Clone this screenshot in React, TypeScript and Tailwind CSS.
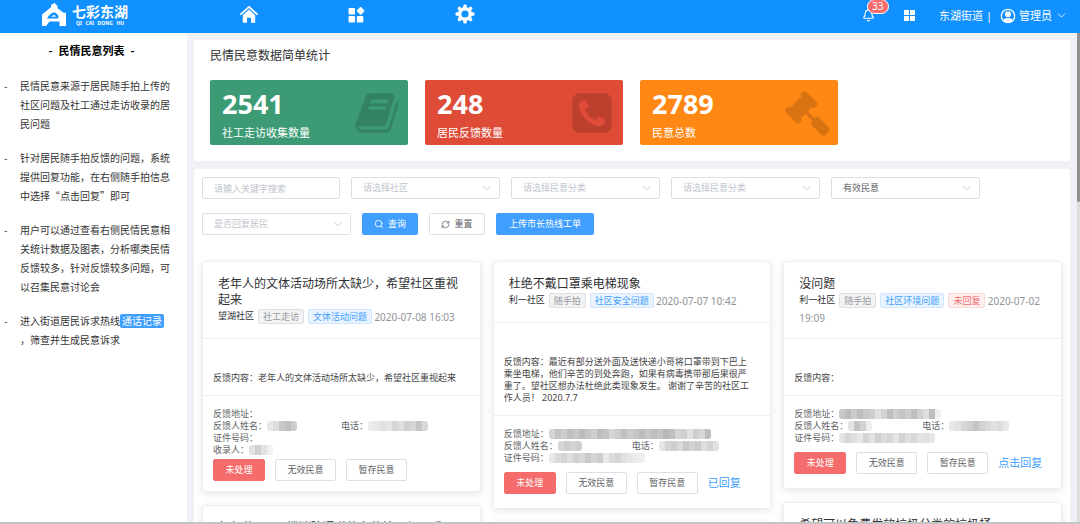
import type { ReactNode } from "react";
import { ChevronDown, RefreshCw, Search, Bell } from "lucide-react";

type Tone = "gray" | "blue" | "red";

type Opinion = {
  title: string;
  community?: string;
  tags?: { text: string; tone: Tone }[];
  time?: string;
  content?: string;
  address?: number[];
  name?: number[];
  phone?: number[];
  idNumber?: number[];
  recorder?: number[];
  reply?: string;
};

const columns: Opinion[][] = [
  [
    {
      title: "老年人的文体活动场所太缺少，希望社区重视起来",
      community: "望湖社区",
      tags: [
        { text: "社工走访", tone: "gray" },
        { text: "文体活动问题", tone: "blue" },
      ],
      time: "2020-07-08 16:03",
      content: "老年人的文体活动场所太缺少，希望社区重视起来",
      name: [232, 222, 200, 190, 206],
      phone: [236, 232, 226, 230, 214, 222, 208, 214, 196, 216],
      recorder: [226, 208, 226, 240],
    },
    { title: "胡郭花园201楼消防通道停车的情况很严重" },
  ],
  [
    {
      title: "杜绝不戴口罩乘电梯现象",
      community: "利一社区",
      tags: [
        { text: "随手拍", tone: "gray" },
        { text: "社区安全问题", tone: "blue" },
      ],
      time: "2020-07-07 10:42",
      content:
        "最近有部分送外面及送快递小哥将口罩带到下巴上乘坐电梯，他们辛苦的到处奔跑，如果有病毒携带那后果很严重了。望社区想办法杜绝此类现象发生。 谢谢了辛苦的社区工作人员！ 2020.7.7",
      address: [
        212, 196, 204, 190, 200, 186, 198, 206, 190, 196, 214, 206, 192, 204,
        198, 188, 200, 190, 196, 184, 192, 214, 208, 226, 206, 216, 190,
      ],
      name: [214, 204, 212, 206],
      phone: [230, 212, 206, 218, 200, 210, 204, 222, 210, 226],
      idNumber: [
        232, 218, 212, 222, 208, 216, 200, 214, 206, 234, 218, 212, 224, 230,
        236, 238,
      ],
      reply: "已回复",
    },
    { title: "" },
  ],
  [
    {
      title: "没问题",
      community: "利一社区",
      tags: [
        { text: "随手拍", tone: "gray" },
        { text: "社区环境问题", tone: "blue" },
        { text: "未回复", tone: "red" },
      ],
      time: "2020-07-02 19:09",
      content: "",
      address: [
        200, 188, 204, 190, 200, 206, 224, 212, 190, 206, 196, 204, 192, 208,
        222, 190, 238,
      ],
      name: [226, 196, 210, 238],
      phone: [232, 226, 214, 208, 196, 210, 216, 226, 220, 232],
      idNumber: [
        228, 214, 224, 232, 212, 226, 208, 220, 214, 228, 210, 222, 216, 228,
        224, 230,
      ],
      reply: "点击回复",
    },
    { title: "希望可以免费发放垃圾分类的垃圾桶" },
  ],
];

const stats = [
  { value: "2541", label: "社工走访收集数量", color: "bg-[#3c9b74]", icon: <BookIcon /> },
  { value: "248", label: "居民反馈数量", color: "bg-[#de4b37]", icon: <PhoneIcon /> },
  { value: "2789", label: "民意总数", color: "bg-[#ff8714]", icon: <GavelIcon /> },
];

const tagTones: Record<Tone, string> = {
  gray: "border-[#e0e0e2] bg-[#f3f3f4] text-[#999ba0]",
  blue: "border-[#cfe6fc] bg-[#eaf4fe] text-[#409eff]",
  red: "border-[#fbd8d8] bg-[#feeeee] text-[#f56c6c]",
};

function FaGlyph({ d }: { d: string }) {
  return (
    <svg viewBox="0 0 1792 1792" className="size-[46px] fill-black/15" aria-hidden="true">
      <path d={d} />
    </svg>
  );
}

function BookIcon() {
  return (
    <FaGlyph d="M1703 478q40 57 18 129l-275 906q-19 64-76.5 107.5t-122.5 43.5h-923q-77 0-148.5-53.5t-99.5-131.5q-24-67-2-127 0-4 3-27t4-37q1-8-3-21.5t-3-19.5q2-11 8-21t16.5-23.5 16.5-23.5q23-38 45-91.5t30-91.5q3-10 .5-30t-.5-28q3-11 17-28t17-23q21-36 42-92t25-90q1-9-2.5-32t.5-28q4-13 22-30.5t22-22.5q19-26 42.5-84.5t27.5-96.5q1-8-3-25.5t-2-26.5q2-8 9-18t18-23 17-21q8-12 16.5-30.5t15-35 16-36 19.5-32 26.5-23.5 36-11.5 47.5 5.5l-1 3q38-9 51-9h761q74 0 114 56t18 130l-274 906q-36 119-71.5 153.5t-128.5 34.5h-869q-27 0-38 15-11 16-1 43 24 70 144 70h923q29 0 56-15.5t35-41.5l300-987q7-22 5-57 38 15 59 43zm-1064 2q-4 13 2 22.5t20 9.5h608q13 0 25.5-9.5t16.5-22.5l21-64q4-13-2-22.5t-20-9.5h-608q-13 0-25.5 9.5t-16.5 22.5zm-83 256q-4 13 2 22.5t20 9.5h608q13 0 25.5-9.5t16.5-22.5l21-64q4-13-2-22.5t-20-9.5h-608q-13 0-25.5 9.5t-16.5 22.5z" />
  );
}

function PhoneIcon() {
  return (
    <FaGlyph d="M1408 1193q0-11-2-16t-18-16.5-40.5-25-47.5-26.5-45.5-25-28.5-15q-5-3-19-13t-25-15-21-5q-15 0-36.5 20.5t-39.5 45-38.5 45-33.5 20.5q-7 0-16.5-3.5t-15.5-6.5-17-9.5-14-8.5q-99-55-170-126.5t-127-170.5q-2-3-8.5-14t-9.5-17-6.5-15.5-3.5-16.5q0-13 20.5-33.5t45-38.5 45-39.5 20.5-36.5q0-10-5-21t-15-25-13-19q-3-6-15-28.5t-25-45.5-26.5-47.5-25-40.5-16.5-18-16-2q-48 0-101 22-46 21-80 94.5t-34 130.5q0 16 2.5 34t5 30.5 9 33 10 29.5 12.5 33 11 30q60 164 216.5 320.5t320.5 216.5q6 2 30 11t33 12.5 29.5 10 33 9 30.5 5 34 2.5q57 0 130.5-34t94.5-80q22-53 22-101zm256-777v960q0 119-84.5 203.5t-203.5 84.5h-960q-119 0-203.5-84.5t-84.5-203.5v-960q0-119 84.5-203.5t203.5-84.5h960q119 0 203.5 84.5t84.5 203.5z" />
  );
}

function GavelIcon() {
  return (
    <FaGlyph d="M1771 1536q0 53-37 90l-107 108q-39 37-91 37-53 0-90-37l-363-364q-38-36-38-90 0-53 43-96l-256-256-126 126q-14 14-34 14t-34-14q2 2 12.5 12t12.5 13 10 11.5 10 13.5 6 13.5 5.5 16.5 1.5 18q0 38-28 68-3 3-16.5 18t-19 20.5-18.5 16.5-22 15.5-22 9-26 4.5q-40 0-68-28l-408-408q-28-28-28-68 0-13 4.5-26t9-22 15.5-22 16.5-18.5 20.5-19 18-16.5q30-28 68-28 10 0 18 1.5t16.5 5.5 13.5 6 13.5 10 11.5 10 13 12.5 12 12.5q-14-14-14-34t14-34l348-348q14-14 34-14t34 14q-2-2-12.5-12t-12.5-13-10-11.5-10-13.5-6-13.5-5.5-16.5-1.5-18q0-38 28-68 3-3 16.5-18t19-20.5 18.5-16.5 22-15.5 22-9 26-4.5q40 0 68 28l408 408q28 28 28 68 0 13-4.5 26t-9 22-15.5 22-16.5 18.5-20.5 19-18 16.5q-30 28-68 28-10 0-18-1.5t-16.5-5.5-13.5-6-13.5-10-11.5-10-13-12.5-12-12.5q14 14 14 34t-14 34l-126 126 256 256q43-43 96-43 52 0 91 37l363 363q37 39 37 91z" />
  );
}

function LogoIcon() {
  return (
    <svg viewBox="0 0 24 23" className="h-[23px] w-6" fill="white" aria-hidden="true">
      <path
        fillRule="evenodd"
        d="M0 23V11.5L9 4.300V2L12.500 0l3 3v2.200L22 10l2-.5V23h-6.500v-4.500H8.500C6 18.500 5.500 23 3.500 23zM5 15.500h9.500c1.200 0 2-.6 2-1.600 0-1.800-2.500-4.400-4.500-4.400S6.500 12.500 5 15.500z"
      />
      <path d="M9 13.800 12.200 11.800 14 13.800z" />
    </svg>
  );
}

function HomeIcon() {
  return (
    <svg viewBox="0 0 18 18" className="size-[18px]" fill="white" aria-hidden="true">
      <path d="M1 9.2 9 1.8l8 7.400" fill="none" stroke="white" strokeWidth="1.8" strokeLinecap="round" strokeLinejoin="round" />
      <path d="M9 4.500l6.200 5.800V17a.8.8 0 0 1-.8.8H11v-5H7v5H3.600a.8.8 0 0 1-.8-.8v-6.700z" />
    </svg>
  );
}

function AppsIcon() {
  return (
    <svg viewBox="0 0 17 17" className="size-[17px]" fill="white" aria-hidden="true">
      <rect x="0.500" y="2" width="6.500" height="6.500" rx="1" />
      <rect x="0.500" y="10" width="6.500" height="6.500" rx="1" />
      <rect x="8.800" y="10" width="6.500" height="6.500" rx="1" />
      <rect x="9.600" y="1.900" width="6" height="6" rx="1" transform="rotate(45 12.600 4.900)" />
    </svg>
  );
}

function GearIcon() {
  return (
    <svg viewBox="-10 -10 20 20" className="size-5" fill="white" aria-hidden="true">
      {[0, 45, 90, 135].map((angle) => (
        <rect key={angle} x="-1.700" y="-9.500" width="3.400" height="19" rx="1.300" transform={`rotate(${angle})`} />
      ))}
      <circle r="7" />
      <circle r="3.600" fill="#1190ff" />
    </svg>
  );
}

function UserIcon() {
  return (
    <svg viewBox="0 0 16 16" className="size-4" aria-hidden="true">
      <circle cx="8" cy="8" r="6.700" fill="none" stroke="white" strokeWidth="1.300" />
      <circle cx="8" cy="6.200" r="2.900" fill="white" />
      <path d="M3 12.300C4 10.500 6 10 8 10s4 .5 5 2.300A6.700 6.700 0 0 1 3 12.300z" fill="white" />
    </svg>
  );
}

function Header() {
  return (
    <header className="relative z-10 flex h-[33px] shrink-0 items-center bg-[#1190ff] text-white">
      <div className="flex w-[187px] shrink-0 items-center gap-[6px] pb-[5px] pl-[42px]">
        <LogoIcon />
        <div className="pt-px">
          <p className="text-[14px] leading-[18px] font-bold">七彩东湖</p>
          <p className="flex justify-between px-1 text-[5px] leading-[5px] font-bold">
            <span>QI</span>
            <span>CAI</span>
            <span>DONG</span>
            <span>HU</span>
          </p>
        </div>
      </div>
      <nav className="flex flex-1 items-center gap-[90px] pb-[5px] pl-[53px]">
        <a href="#home" aria-label="首页"><HomeIcon /></a>
        <a href="#apps" aria-label="应用"><AppsIcon /></a>
        <a href="#settings" aria-label="设置"><GearIcon /></a>
      </nav>
      <div className="flex items-center pr-3 pb-[2px] text-[11px] leading-4">
        <button aria-label="消息" className="relative mr-[29px]">
          <Bell size={13} strokeWidth={2} />
          <span className="absolute -top-[10px] left-[5px] rounded-full border border-white bg-[#f56c6c] px-1 text-[10px] leading-[13px]">
            33
          </span>
        </button>
        <button aria-label="菜单" className="mr-6">
          <svg viewBox="0 0 11 11" className="size-[11px]" fill="white">
            <path d="M0 0h5v5H0zM6 0h5v5H6zM0 6h5v5H0zM6 6h5v5H6z" />
          </svg>
        </button>
        <span className="mr-2">东湖街道 |</span>
        <button className="flex items-center gap-[3px]">
          <UserIcon />
          管理员
          <ChevronDown size={13} strokeWidth={1.5} />
        </button>
      </div>
    </header>
  );
}

function Note({ children }: { children: ReactNode }) {
  return (
    <li className="flex">
      <span className="w-4 shrink-0">-</span>
      <div>{children}</div>
    </li>
  );
}

function Sidebar() {
  return (
    <aside className="w-[187px] shrink-0 bg-white font-['Noto_Sans_CJK_SC','Noto_Sans',sans-serif] text-[#333]">
      <h2 className="flex justify-center gap-[6px] pt-[9px] pr-1 text-[11px] leading-4 font-bold text-black">
        <span>-</span>
        <span>民情民意列表</span>
        <span>-</span>
      </h2>
      <ul className="flex flex-col gap-[15px] pt-[18px] pr-4 pl-1 text-[10px] leading-[19px]">
        <Note>民情民意来源于居民随手拍上传的社区问题及社工通过走访收录的居民问题</Note>
        <Note>针对居民随手拍反馈的问题，系统提供回复功能，在右侧随手拍信息中选择“点击回复”即可</Note>
        <Note>用户可以通过查看右侧民情民意相关统计数据及图表，分析哪类民情反馈较多，针对反馈较多问题，可以召集民意讨论会</Note>
        <Note>
          进入街道居民诉求热线
          <button className="rounded-[2px] bg-[#409eff] px-[2px] leading-[14px] text-white">通话记录</button>
          <br />
          ，筛查并生成民意诉求
        </Note>
      </ul>
    </aside>
  );
}

function Stats() {
  return (
    <section className="rounded-[2px] bg-white px-4 pt-2 pb-4">
      <h1 className="text-[12px] leading-4 text-[#303133]">民情民意数据简单统计</h1>
      <div className="flex gap-[17px] pt-4">
        {stats.map((stat) => (
          <div
            key={stat.label}
            className={`flex h-[65px] w-[198px] items-center justify-between rounded-[2px] pr-2 pl-3 text-white ${stat.color}`}
          >
            <div className="pt-1">
              <p className="text-[27px] leading-8 font-bold">{stat.value}</p>
              <p className="pt-1 text-[11px] leading-[18px]">{stat.label}</p>
            </div>
            {stat.icon}
          </div>
        ))}
      </div>
    </section>
  );
}

function FilterSelect({ label, filled = false }: { label: string; filled?: boolean }) {
  return (
    <div className="relative w-[149px]">
      <select
        aria-label={label}
        className={`block h-[22px] w-full appearance-none rounded-[2px] border border-[#dcdfe6] bg-white pr-6 pl-[11px] text-[9px] ${
          filled ? "text-[#606266]" : "text-[#c0c4cc]"
        }`}
      >
        <option>{label}</option>
      </select>
      <ChevronDown
        size={14}
        strokeWidth={1.5}
        className="pointer-events-none absolute top-1 right-[6px] text-[#c0c4cc]"
      />
    </div>
  );
}

function Filters() {
  const button = "flex h-[22px] items-center justify-center gap-1 rounded-[2px] border text-[9px]";

  return (
    <form className="flex flex-wrap gap-x-[11px] gap-y-[14px]" onSubmit={(e) => e.preventDefault()}>
      <input
        aria-label="关键字"
        placeholder="请输入关键字搜索"
        className="h-[22px] w-[138px] rounded-[2px] border border-[#dcdfe6] px-[11px] text-[9px] placeholder:text-[#c0c4cc]"
      />
      <FilterSelect label="请选择社区" />
      <FilterSelect label="请选择民意分类" />
      <FilterSelect label="请选择民意分类" />
      <FilterSelect label="有效民意" filled />
      <FilterSelect label="是否回复居民" />
      <button className={`${button} w-14 border-[#409eff] bg-[#409eff] text-white`}>
        <Search size={10} strokeWidth={2} />
        查询
      </button>
      <button type="reset" className={`${button} w-14 border-[#dcdfe6] text-[#606266]`}>
        <RefreshCw size={9} strokeWidth={2} />
        重置
      </button>
      <button type="button" className={`${button} w-[98px] border-[#409eff] bg-[#409eff] text-white`}>
        上传市长热线工单
      </button>
    </form>
  );
}

// masked personal data, one grey level per block
function Masked({ shades = [] }: { shades?: number[] }) {
  return (
    <span className="flex overflow-hidden rounded-[3px]">
      {shades.map((shade, i) => (
        <span key={i} className="h-[10px] w-[6px]" style={{ backgroundColor: `rgb(${shade} ${shade} ${shade})` }} />
      ))}
    </span>
  );
}

function OpinionCard({ item }: { item: Opinion }) {
  const button = "h-[22px] rounded-[2px] border text-[9px]";

  return (
    <article className="rounded-[3px] border border-[#ebeef5] bg-white shadow-[0_2px_9px_rgba(0,0,0,0.1)]">
      <header className="min-h-[60px] border-b border-[#ebeef5] px-[15px] pt-[14px] pb-[13px]">
        <h3 className="text-[12px] leading-4 text-[#303133]">{item.title}</h3>
        <p className="text-[9px] leading-4 text-[#303133]">
          {item.community}
          {item.tags?.map((tag) => (
            <span
              key={tag.text}
              className={`ml-1 inline-block rounded-[2px] border px-1 align-middle leading-[13px] ${tagTones[tag.tone]}`}
            >
              {tag.text}
            </span>
          ))}{" "}
          <time className="align-middle text-[10px] text-[#909399]">{item.time}</time>
        </p>
      </header>
      {item.community && (
        <>
          <p className="border-b border-[#ebeef5] pt-[33px] pr-[18px] pb-[11px] pl-[10px] text-[9px] leading-3 text-[#444]">
            反馈内容：{item.content}
          </p>
          <div className={`px-[10px] pt-3 text-[9px] leading-3 text-[#606266] ${item.recorder ? "pb-[10px]" : "pb-[14px]"}`}>
            <div className="flex items-center">反馈地址：<Masked shades={item.address} /></div>
            <div className="flex">
              <div className="flex w-[128px] items-center">反馈人姓名：<Masked shades={item.name} /></div>
              <div className="flex items-center">电话：<Masked shades={item.phone} /></div>
            </div>
            <div className="flex items-center">证件号码：<Masked shades={item.idNumber} /></div>
            {item.recorder && <div className="flex items-center">收录人：<Masked shades={item.recorder} /></div>}
            <div className={`flex items-center gap-[10px] ${item.recorder ? "pt-[3px]" : "pt-2"}`}>
              <button className={`${button} w-[52px] border-[#f56c6c] bg-[#f56c6c] text-white`}>未处理</button>
              <button className={`${button} w-[61px] border-[#dcdfe6]`}>无效民意</button>
              <button className={`${button} w-[61px] border-[#dcdfe6]`}>暂存民意</button>
              {item.reply && (
                <a href="#reply" className="text-[11px] text-[#409eff]">
                  {item.reply}
                </a>
              )}
            </div>
          </div>
        </>
      )}
    </article>
  );
}

export default function App() {
  return (
    <div className="flex h-screen flex-col overflow-hidden border-b-2 border-[#c4c4c4] bg-[#f0f1f7] font-['Noto_Sans','Noto_Sans_CJK_SC',sans-serif]">
      <Header />
      <div className="flex min-h-0 flex-1">
        <Sidebar />
        <main className="flex min-w-0 flex-1 flex-col gap-2 overflow-hidden px-[7px] pt-[7px]">
          <Stats />
          <section className="rounded-[2px] bg-white p-2">
            <Filters />
            <div className="grid grid-cols-3 items-start gap-3 pt-[26px]">
              {columns.map((items, i) => (
                <div key={i} className="flex flex-col gap-[13px]">
                  {items.map((item) => (
                    <OpinionCard key={item.title} item={item} />
                  ))}
                </div>
              ))}
            </div>
          </section>
        </main>
        <div className="w-[3px] shrink-0 bg-[#dedede]">
          <div className="h-[169px] rounded-b-[2px] bg-[#929292]" />
        </div>
      </div>
    </div>
  );
}
